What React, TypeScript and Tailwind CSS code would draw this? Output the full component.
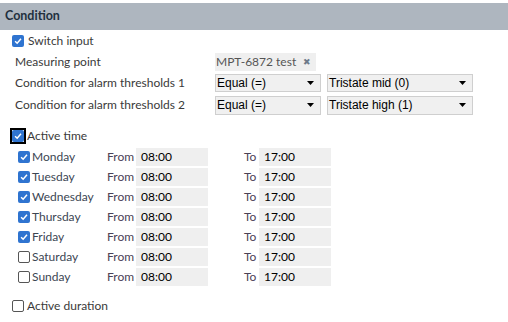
import React from "react";

const font = { fontFamily: 'Lato, "Noto Sans", sans-serif' };

function Check({ checked, focus }: { checked: boolean; focus?: boolean }) {
  const box = checked ? (
    <span className="flex h-[12px] w-[12px] items-center justify-center rounded-[2px] bg-[#2f74d0]">
      <svg viewBox="0 0 12 12" className="h-[10px] w-[10px]">
        <path d="M2.5 6.2 L5 8.6 L9.6 3.4" fill="none" stroke="#fff" strokeWidth="1.8" />
      </svg>
    </span>
  ) : (
    <span className="h-[12px] w-[12px] rounded-[2px] border border-[#555] bg-white" />
  );
  if (focus) {
    return <span className="flex h-[16px] w-[16px] items-center justify-center border-2 border-black">{box}</span>;
  }
  return box;
}

function Combo({ label, width }: { label: string; width: string }) {
  return (
    <div
      className={`flex h-full items-center justify-between border border-[#cfcfcf] bg-[#f0f0f0] pl-[1px] pr-[6px] text-[12px] text-black ${width}`}
      style={{ fontFamily: '"Liberation Sans", Arial, sans-serif' }}
    >
      <span>{label}</span>
      <svg viewBox="0 0 7 4" className="h-[4px] w-[7px]">
        <path d="M0 0 H7 L3.5 4 Z" fill="#000" />
      </svg>
    </div>
  );
}

const days = [
  { name: "Monday", on: true },
  { name: "Tuesday", on: true },
  { name: "Wednesday", on: true },
  { name: "Thursday", on: true },
  { name: "Friday", on: true },
  { name: "Saturday", on: false },
  { name: "Sunday", on: false },
];

export default function App() {
  return (
    <div className="h-[322px] w-[508px] overflow-hidden bg-white text-[12px] text-[#3a3a3a]" style={font}>
      <div className="mt-[3px] flex h-[27px] items-center bg-[#aeb6bf] pl-[5px] text-[12.5px] font-bold text-[#22303e]">
        Condition
      </div>

      <div className="flex h-[21px] items-center gap-[4px] pl-[12px] pt-[1px]">
        <Check checked />
        <span>Switch input</span>
      </div>

      <div className="flex h-[21px] items-center pl-[15px]">
        <span className="w-[200px]">Measuring point</span>
        <span className="flex h-[18px] items-center gap-[7px] bg-[#efefef] pl-[1px] pr-[5px] text-[#555]">
          MPT-6872 test
          <span className="text-[9px] text-[#6d7a8a]">✖</span>
        </span>
      </div>

      <div className="flex h-[22px] items-center pl-[15px]">
        <span className="w-[200px]">Condition for alarm thresholds 1</span>
        <div className="flex h-[18px] gap-[6px]">
          <Combo label="Equal (=)" width="w-[106px]" />
          <Combo label="Tristate mid (0)" width="w-[146px]" />
        </div>
      </div>

      <div className="flex h-[22px] items-center pl-[15px]">
        <span className="w-[200px]">Condition for alarm thresholds 2</span>
        <div className="flex h-[19px] gap-[6px]">
          <Combo label="Equal (=)" width="w-[106px]" />
          <Combo label="Tristate high (1)" width="w-[146px]" />
        </div>
      </div>

      <div className="mt-[10px] flex h-[20px] items-center gap-[1px] pl-[10px]">
        <Check checked focus />
        <span>Active time</span>
      </div>

      <div className="mt-[1px] flex flex-col">
        {days.map((d) => (
          <div key={d.name} className="flex h-[20px] items-center pl-[18px]">
            <div className="flex w-[89px] items-center gap-[2px]">
              <Check checked={d.on} />
              <span className="text-[#3c4653]">{d.name}</span>
            </div>
            <span className="w-[29px] text-[#4a4256]">From</span>
            <span className="flex h-[18px] w-[72px] items-center bg-[#efefef] pl-[5px] text-black">08:00</span>
            <span className="ml-[36px] w-[15px] text-[#4a4256]">To</span>
            <span className="flex h-[18px] w-[72px] items-center bg-[#efefef] pl-[5px] text-black">17:00</span>
          </div>
        ))}
      </div>

      <div className="mt-[9px] flex h-[20px] items-center gap-[3px] pl-[12px]">
        <Check checked={false} />
        <span>Active duration</span>
      </div>
    </div>
  );
}
